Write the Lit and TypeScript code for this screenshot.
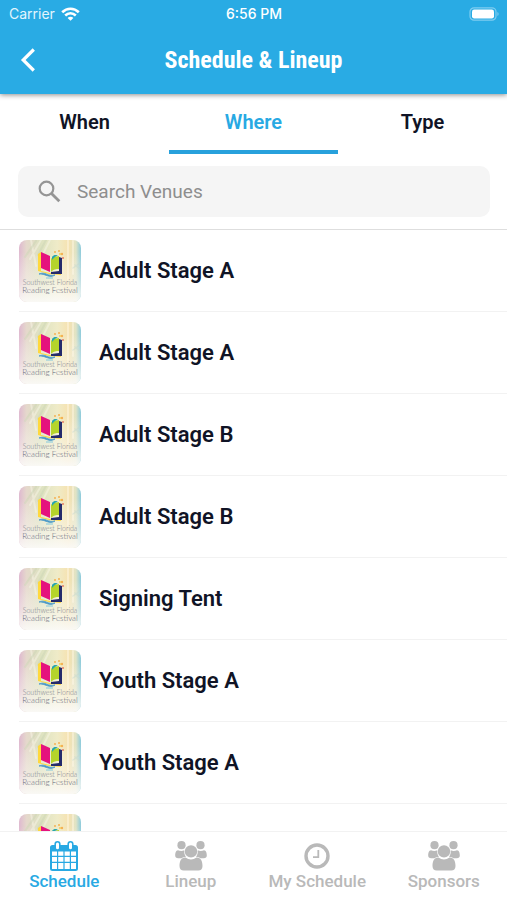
import { LitElement, html, css, svg } from "lit";
import { customElement, property, state } from "lit/decorators.js";
import { classMap } from "lit/directives/class-map.js";

@customElement("status-bar")
class StatusBar extends LitElement {
  static styles = css`
    :host {
      display: grid;
      grid-template-columns: 1fr auto 1fr;
      align-items: center;
      height: 28px;
      padding: 0 8px 0 9px;
      font-size: 14px;
      font-family: Inter, Roboto, sans-serif;
      line-height: 18px;
      color: #fff;
    }
    .carrier {
      display: flex;
      align-items: center;
      gap: 6px;
      color: #e2f5fd;
    }
    .time {
      font-size: 14px;
      font-weight: 500;
    }
    .battery {
      justify-self: end;
    }
    svg {
      display: block;
    }
  `;
  render() {
    return html`
      <span class="carrier">
        <span>Carrier</span>
        <svg width="19" height="14" viewBox="0 0 19 14" fill="none" stroke="#fff" stroke-width="2.600" aria-hidden="true">
          <path d="M1.2 5.2C6 .5 13 .5 17.800 5.200" />
          <path d="M4.200 8.500C7.300 5.600 11.700 5.600 14.800 8.500" />
          <path d="M9.500 13.800L6.600 10.900C8.200 9.400 10.800 9.400 12.400 10.900Z" fill="#fff" stroke="none" />
        </svg>
      </span>
      <span class="time">6:56 PM</span>
      <svg class="battery" width="30" height="14" viewBox="0 0 30 14" aria-hidden="true">
        <rect x="1" y=".8" width="26" height="12.400" rx="4" fill="none" stroke="#7fcdf0" stroke-width="1.200" />
        <rect x="3" y="2.600" width="22" height="8.800" rx="2.200" fill="#fff" />
        <path d="M28.400 5C30 5.600 30 8.400 28.400 9Z" fill="#7fcdf0" />
      </svg>
    `;
  }
}

@customElement("venue-thumb")
class VenueThumb extends LitElement {
  static styles = css`
    :host {
      display: block;
      flex: none;
      width: 62px;
      height: 62px;
      border-radius: 8px;
      overflow: hidden;
    }
    svg {
      display: block;
    }
    .line {
      font-family: Lato, sans-serif;
      font-weight: 300;
      text-anchor: middle;
    }
    .small {
      font-size: 7px;
      fill: #7d828e;
    }
    .big {
      font-size: 8px;
      fill: #5c6275;
    }
  `;
  render() {
    return html`
      <svg width="62" height="62" viewBox="0 0 62 62" role="img" aria-label="Southwest Florida Reading Festival">
        <defs>
          <linearGradient id="wash" x1="0" y1="0" x2="1" y2="0">
            <stop offset="0" stop-color="#dfb9d0" />
            <stop offset=".12" stop-color="#e5d8cc" />
            <stop offset=".35" stop-color="#dde2c0" />
            <stop offset=".62" stop-color="#efebc8" />
            <stop offset=".8" stop-color="#f6e2b0" />
            <stop offset=".92" stop-color="#dfe3c6" />
            <stop offset="1" stop-color="#8ccbdd" />
          </linearGradient>
          <linearGradient id="fade" x1="0" y1="0" x2="0" y2="1">
            <stop offset=".2" stop-color="#fff" stop-opacity="0" />
            <stop offset=".65" stop-color="#faf8f2" stop-opacity=".45" />
            <stop offset="1" stop-color="#fbfaf7" stop-opacity=".95" />
          </linearGradient>
        </defs>
        <rect width="62" height="62" fill="url(#wash)" />
        <g fill="none" stroke-linecap="round">
          <path d="M12 0L17 26M22 0L11 19M31 0L25 12" stroke="#f8f6e6" stroke-width="2" opacity=".5" />
          <path d="M17 1L6 17M27 0L19 15" stroke="#cbd5b5" stroke-width="2" opacity=".5" />
          <path d="M49 0V40M54 0V34" stroke="#fbf4dc" stroke-width="2" opacity=".6" />
          <path d="M54 28L61 23M56 25L61 29" stroke="#b7cfc4" stroke-width="1.500" opacity=".5" />
        </g>
        <rect width="62" height="62" fill="url(#fade)" />
        <path d="M19 14L22 12V31L31 33L42 33V35L30 34L19 31Z" fill="#ffd83d" />
        <path d="M40 17L43 18V34L32 34V32L40 31Z" fill="#252a6b" />
        <path d="M22 12L31 16V32L22 28Z" fill="#e5127d" />
        <path d="M32 19C34 16 37 17 40 16V29C37 29 35 29 32 32Z" fill="#b5d42b" />
        <path d="M33 17C35 14 38 15 39 16C36 16 35 18 33 20Z" fill="#27a6ad" />
        <path d="M20 34C26 31 29 37 36 35C30 39 26 33 20 34Z" fill="#3187bd" stroke="#5aa3cc" />
        <path d="M27 38L34 38" stroke="#82c8dd" />
        <g fill="#f4b052">
          <circle cx="36" cy="12" r="1" />
          <circle cx="40" cy="11" r="1" />
          <circle cx="43" cy="14" r="1.200" />
          <circle cx="44" cy="18" r="1" fill="#e57d66" />
          <circle cx="41" cy="14" r="1" fill="#f2cc55" />
        </g>
        <text class="line small" x="31" y="45">Southwest Florida</text>
        <text class="line big" x="31" y="53">Reading Festival</text>
      </svg>
    `;
  }
}

const person = svg`
  <circle cx="6.500" cy="4.200" r="4.100" />
  <circle cx="25.500" cy="4.200" r="4.100" />
  <path d="M3 9.200C5 10.300 7.500 10.200 9.300 9.300C9 12 9.700 14.200 11 15.700C8.800 15.800 7.600 16.300 6.500 17.300H3.200C1.300 17.300.200 16.200.200 14.500C.200 12 .900 9.300 3 9.200Z" />
  <path d="M29 9.200C27 10.300 24.500 10.200 22.700 9.300C23 12 22.300 14.200 21 15.700C23.200 15.800 24.400 16.300 25.500 17.300H28.800C30.700 17.300 31.800 16.200 31.800 14.500C31.800 12 31.100 9.300 29 9.200Z" />
  <circle cx="16" cy="10.400" r="6.200" />
  <path d="M10.500 16.600C14 19.200 18 19.200 21.500 16.600C25.800 16.300 27.500 20.500 27.500 25C27.500 28 25.800 29.500 23.300 29.500H8.700C6.200 29.500 4.500 28 4.500 25C4.500 20.500 6.200 16.300 10.500 16.600Z" />
`;

const icons: Record<string, unknown> = {
  calendar: html`<svg width="28" height="30" viewBox="0 0 28 30" aria-hidden="true">
    <path fill="currentColor" fill-rule="evenodd" d="M2.500 4H25.500Q28 4 28 6.500V27.500Q28 30 25.500 30H2.500Q0 30 0 27.500V6.500Q0 4 2.500 4ZM2 10.500V14.800H7V10.500ZM8.200 10.500V14.800H13.400V10.500ZM14.600 10.500V14.800H19.800V10.500ZM21 10.500V14.800H26V10.500ZM2 16V20.800H7V16ZM8.200 16V20.800H13.400V16ZM14.600 16V20.800H19.800V16ZM21 16V20.800H26V16ZM2 22V28H7V22ZM8.200 22V28H13.400V22ZM14.600 22V28H19.800V22ZM21 22V28H26V22Z" />
    <rect x="5.200" y=".8" width="4.600" height="8.200" rx="2.300" fill="#fff" stroke="currentColor" stroke-width="1.600" />
    <rect x="18.200" y=".8" width="4.600" height="8.200" rx="2.300" fill="#fff" stroke="currentColor" stroke-width="1.600" />
  </svg>`,
  group: html`<svg width="32" height="30" viewBox="0 0 32 30" fill="currentColor" aria-hidden="true">${person}</svg>`,
  clock: html`<svg width="26" height="30" viewBox="0 0 26 30" fill="none" stroke="currentColor" aria-hidden="true">
    <circle cx="13" cy="15" r="11" stroke-width="3.400" />
    <path d="M14.300 9V16.200H9" stroke-width="1.800" />
  </svg>`,
};

@customElement("bottom-nav")
class BottomNav extends LitElement {
  @property() current = "Schedule";
  static styles = css`
    :host {
      display: block;
      flex: none;
      background: #fff;
      border-top: 1px solid #f2f2f2;
    }
    nav {
      display: grid;
      grid-template-columns: repeat(4, 1fr);
      height: 68px;
      padding-left: 1px;
    }
    a {
      display: flex;
      flex-direction: column;
      align-items: center;
      padding-top: 9px;
      font-size: 17px;
      line-height: 20px;
      font-weight: 500;
      color: #b9b9b9;
      text-decoration: none;
      white-space: nowrap;
    }
    .on {
      color: #28a9e3;
    }
    svg {
      display: block;
    }
  `;
  render() {
    const items = [
      ["Schedule", "calendar"],
      ["Lineup", "group"],
      ["My Schedule", "clock"],
      ["Sponsors", "group"],
    ];
    return html`<nav aria-label="Main">
      ${items.map(
        ([label, icon]) =>
          html`<a href="#" class=${classMap({ on: label === this.current })}>${icons[icon]}<span>${label}</span></a>`
      )}
    </nav>`;
  }
}

@customElement("app-root")
class AppRoot extends LitElement {
  @state() tab = "Where";
  static styles = css`
    :host {
      display: flex;
      flex-direction: column;
      height: 100vh;
      overflow: hidden;
      background: #fff;
      color: #101426;
      font-family: Roboto, sans-serif;
    }
    * {
      box-sizing: border-box;
    }
    header {
      position: relative;
      flex: none;
      background: #29abe4;
      box-shadow: 0 1px 5px rgba(0, 0, 0, 0.45);
    }
    .bar {
      display: grid;
      grid-template-columns: 56px 1fr 56px;
      align-items: center;
      height: 66px;
      padding-bottom: 2px;
    }
    h1 {
      margin: 0;
      text-align: center;
      font-family: "Roboto Condensed", Roboto, sans-serif;
      font-size: 24px;
      line-height: 32px;
      font-weight: 700;
      color: #fff;
    }
    button {
      border: 0;
      padding: 0;
      background: none;
      font: inherit;
      color: inherit;
      cursor: pointer;
    }
    .back {
      display: flex;
      justify-content: center;
    }
    .tabs {
      display: grid;
      grid-template-columns: repeat(3, 1fr);
      flex: none;
      height: 60px;
    }
    .tab {
      border-bottom: 4px solid transparent;
      font-size: 20px;
      line-height: 24px;
      font-weight: 600;
    }
    .tab.on {
      color: #28a9e3;
      border-color: #28a1dc;
    }
    .search {
      display: flex;
      align-items: center;
      flex: none;
      gap: 16px;
      height: 51px;
      margin: 12px 17px 12px 18px;
      padding: 0 20px;
      border-radius: 10px;
      background: #f5f5f5;
    }
    input {
      flex: 1;
      min-width: 0;
      border: 0;
      padding: 0;
      outline: 0;
      background: none;
      font: 19px/24px Roboto, sans-serif;
      color: inherit;
    }
    input::placeholder {
      color: #8e8e8e;
      opacity: 1;
    }
    ul {
      flex: 1;
      min-height: 0;
      margin: 0;
      padding: 0 0 0 19px;
      list-style: none;
      overflow-y: auto;
      scrollbar-width: none;
      border-top: 1px solid #dedede;
    }
    li {
      border-bottom: 1px solid #f2f2f2;
    }
    li a {
      display: flex;
      align-items: center;
      gap: 18px;
      height: 81px;
      font-size: 22px;
      line-height: 28px;
      font-weight: 600;
      color: inherit;
      text-decoration: none;
    }
  `;
  render() {
    const venues = [
      "Adult Stage A",
      "Adult Stage A",
      "Adult Stage B",
      "Adult Stage B",
      "Signing Tent",
      "Youth Stage A",
      "Youth Stage A",
      "Youth Stage B",
    ];
    return html`
      <header>
        <status-bar></status-bar>
        <div class="bar">
          <button class="back" aria-label="Back">
            <svg width="16" height="24" viewBox="0 0 16 24" fill="none" stroke="#fff" stroke-width="3.200" aria-hidden="true">
              <path d="M13.800 1.500L3.200 12L13.800 22.500" />
            </svg>
          </button>
          <h1>Schedule &amp; Lineup</h1>
        </div>
      </header>
      <div class="tabs" role="tablist">
        ${["When", "Where", "Type"].map(
          (t) => html`<button
            role="tab"
            aria-selected=${t === this.tab}
            class=${classMap({ tab: true, on: t === this.tab })}
            @click=${() => (this.tab = t)}
          >
            ${t}
          </button>`
        )}
      </div>
      <label class="search">
        <svg width="23" height="23" viewBox="0 0 23 23" fill="none" stroke="#959595" aria-hidden="true">
          <circle cx="8.500" cy="8.500" r="6.800" stroke-width="2.200" />
          <path d="M13.500 13.500L21.300 21.300" stroke-width="2.800" />
        </svg>
        <input type="search" placeholder="Search Venues" aria-label="Search Venues" />
      </label>
      <ul>
        ${venues.map((v) => html`<li><a href="#"><venue-thumb></venue-thumb><span>${v}</span></a></li>`)}
      </ul>
      <bottom-nav></bottom-nav>
    `;
  }
}
